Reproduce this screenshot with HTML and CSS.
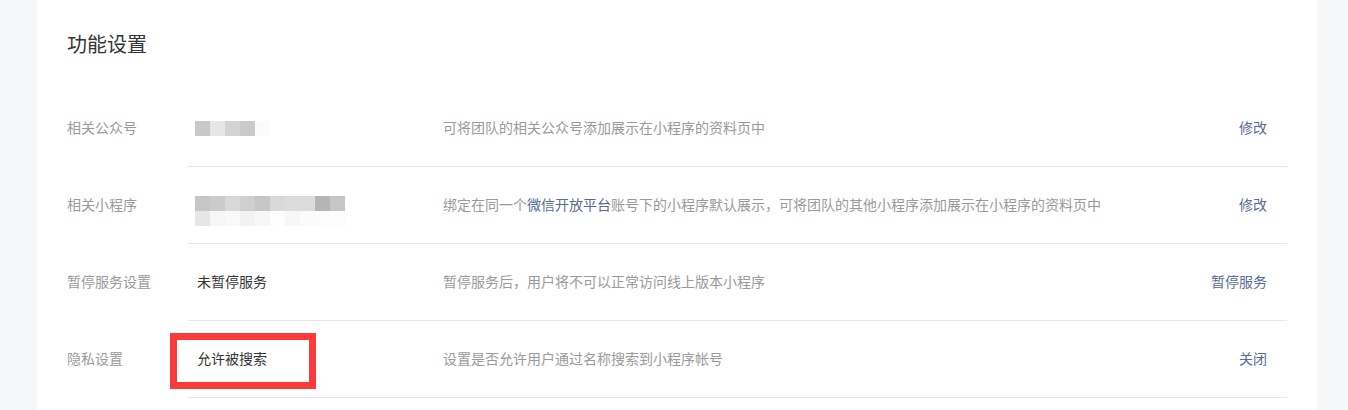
FILE: index.html
```html
<!DOCTYPE html>
<html lang="zh-CN">
<head>
<meta charset="utf-8">
<title>功能设置</title>
<link rel="stylesheet" href="styles.css">
</head>
<body>
<div class="page">
  <section class="card">
    <h2 class="title">功能设置</h2>
    <div class="list">
      <div class="row">
        <div class="label">相关公众号</div>
        <div class="main">
          <div class="value">
            <div class="mosaic mosaic-one">
              <span class="s-c8"></span><span class="s-e6"></span><span class="s-d3"></span><span class="s-ca"></span><span class="s-fb"></span>
            </div>
          </div>
          <div class="desc">可将团队的相关公众号添加展示在小程序的资料页中</div>
          <a class="action">修改</a>
        </div>
      </div>
      <div class="row">
        <div class="label">相关小程序</div>
        <div class="main">
          <div class="value">
            <div class="mosaic mosaic-two">
              <span class="s-c6"></span><span class="s-cb"></span><span class="s-d8"></span><span class="s-cf"></span><span class="s-c6"></span><span class="s-d9"></span><span class="s-dc"></span><span class="s-dc"></span><span class="s-b5"></span><span class="s-c6"></span>
              <span class="s-e6"></span><span class="s-f6"></span><span class="s-f9"></span><span class="s-f2"></span><span class="s-f7"></span><span class="s-fe"></span><span class="s-f7"></span><span class="s-fb"></span><span class="s-fc"></span><span class="s-fc"></span>
            </div>
          </div>
          <div class="desc">绑定在同一个<a class="link">微信开放平台</a>账号下的小程序默认展示，可将团队的其他小程序添加展示在小程序的资料页中</div>
          <a class="action">修改</a>
        </div>
      </div>
      <div class="row">
        <div class="label">暂停服务设置</div>
        <div class="main">
          <div class="value">未暂停服务</div>
          <div class="desc">暂停服务后，用户将不可以正常访问线上版本小程序</div>
          <a class="action">暂停服务</a>
        </div>
      </div>
      <div class="row">
        <div class="label">隐私设置</div>
        <div class="main">
          <div class="value has-mark">允许被搜索<span class="mark"></span></div>
          <div class="desc">设置是否允许用户通过名称搜索到小程序帐号</div>
          <a class="action">关闭</a>
        </div>
      </div>
    </div>
  </section>
</div>
</body>
</html>
```

FILE: styles.css
```css
* { box-sizing: border-box; }
html, body {
  margin: 0;
  padding: 0;
  background: #f6f7f9;
  font-family: "Noto Sans CJK SC", "Noto Sans", sans-serif;
  font-size: 14px;
  color: #353535;
}
.page {
  padding: 0 31px 0 37px;
  height: 410px;
  overflow: hidden;
}
.card {
  background: #fff;
  padding: 30px 30px 40px 30px;
  min-height: 410px;
}
.title {
  margin: 0 0 32px 0;
  font-size: 20px;
  font-weight: normal;
  line-height: 28px;
  color: #353535;
}
.row {
  display: flex;
  align-items: stretch;
}
.label {
  width: 121px;
  flex: none;
  display: flex;
  align-items: center;
  padding-bottom: 4px;
  color: #9a9a9a;
  line-height: 20px;
}
.main {
  flex: 1;
  display: flex;
  align-items: center;
  height: 77px;
  padding-bottom: 3px;
  border-bottom: 1px solid #e7e7eb;
  padding-right: 20px;
}
.value {
  width: 255px;
  flex: none;
  padding-left: 9px;
  line-height: 20px;
  color: #353535;
  position: relative;
}
.desc {
  flex: 1;
  color: #9a9a9a;
  line-height: 20px;
}
.link { color: #576b95; text-decoration: none; }
.action {
  color: #576b95;
  line-height: 20px;
  cursor: pointer;
}
.mosaic {
  display: grid;
  grid-auto-rows: 15px;
  margin-left: -2px;
}
.mosaic-one { grid-template-columns: repeat(5, 15px); margin-top: 3px; }
.mosaic-two { grid-template-columns: repeat(10, 15px); margin-top: 14px; }
.s-b5 { background: #b5b5b5; }
.s-c6 { background: #c6c6c6; }
.s-c8 { background: #c8c8c8; }
.s-ca { background: #cacaca; }
.s-cb { background: #cbcbcb; }
.s-cf { background: #cfcfcf; }
.s-d3 { background: #d3d3d3; }
.s-d8 { background: #d8d8d8; }
.s-d9 { background: #d9d9d9; }
.s-dc { background: #dcdcdc; }
.s-e6 { background: #e6e6e6; }
.s-f2 { background: #f2f2f2; }
.s-f6 { background: #f6f6f6; }
.s-f7 { background: #f7f7f7; }
.s-f9 { background: #f9f9f9; }
.s-fb { background: #fbfbfb; }
.s-fc { background: #fcfcfc; }
.s-fe { background: #fefefe; }
.mark {
  position: absolute;
  left: -18px;
  top: -15px;
  width: 146px;
  height: 56px;
  border: 7px solid #fc3a3a;
}
```
